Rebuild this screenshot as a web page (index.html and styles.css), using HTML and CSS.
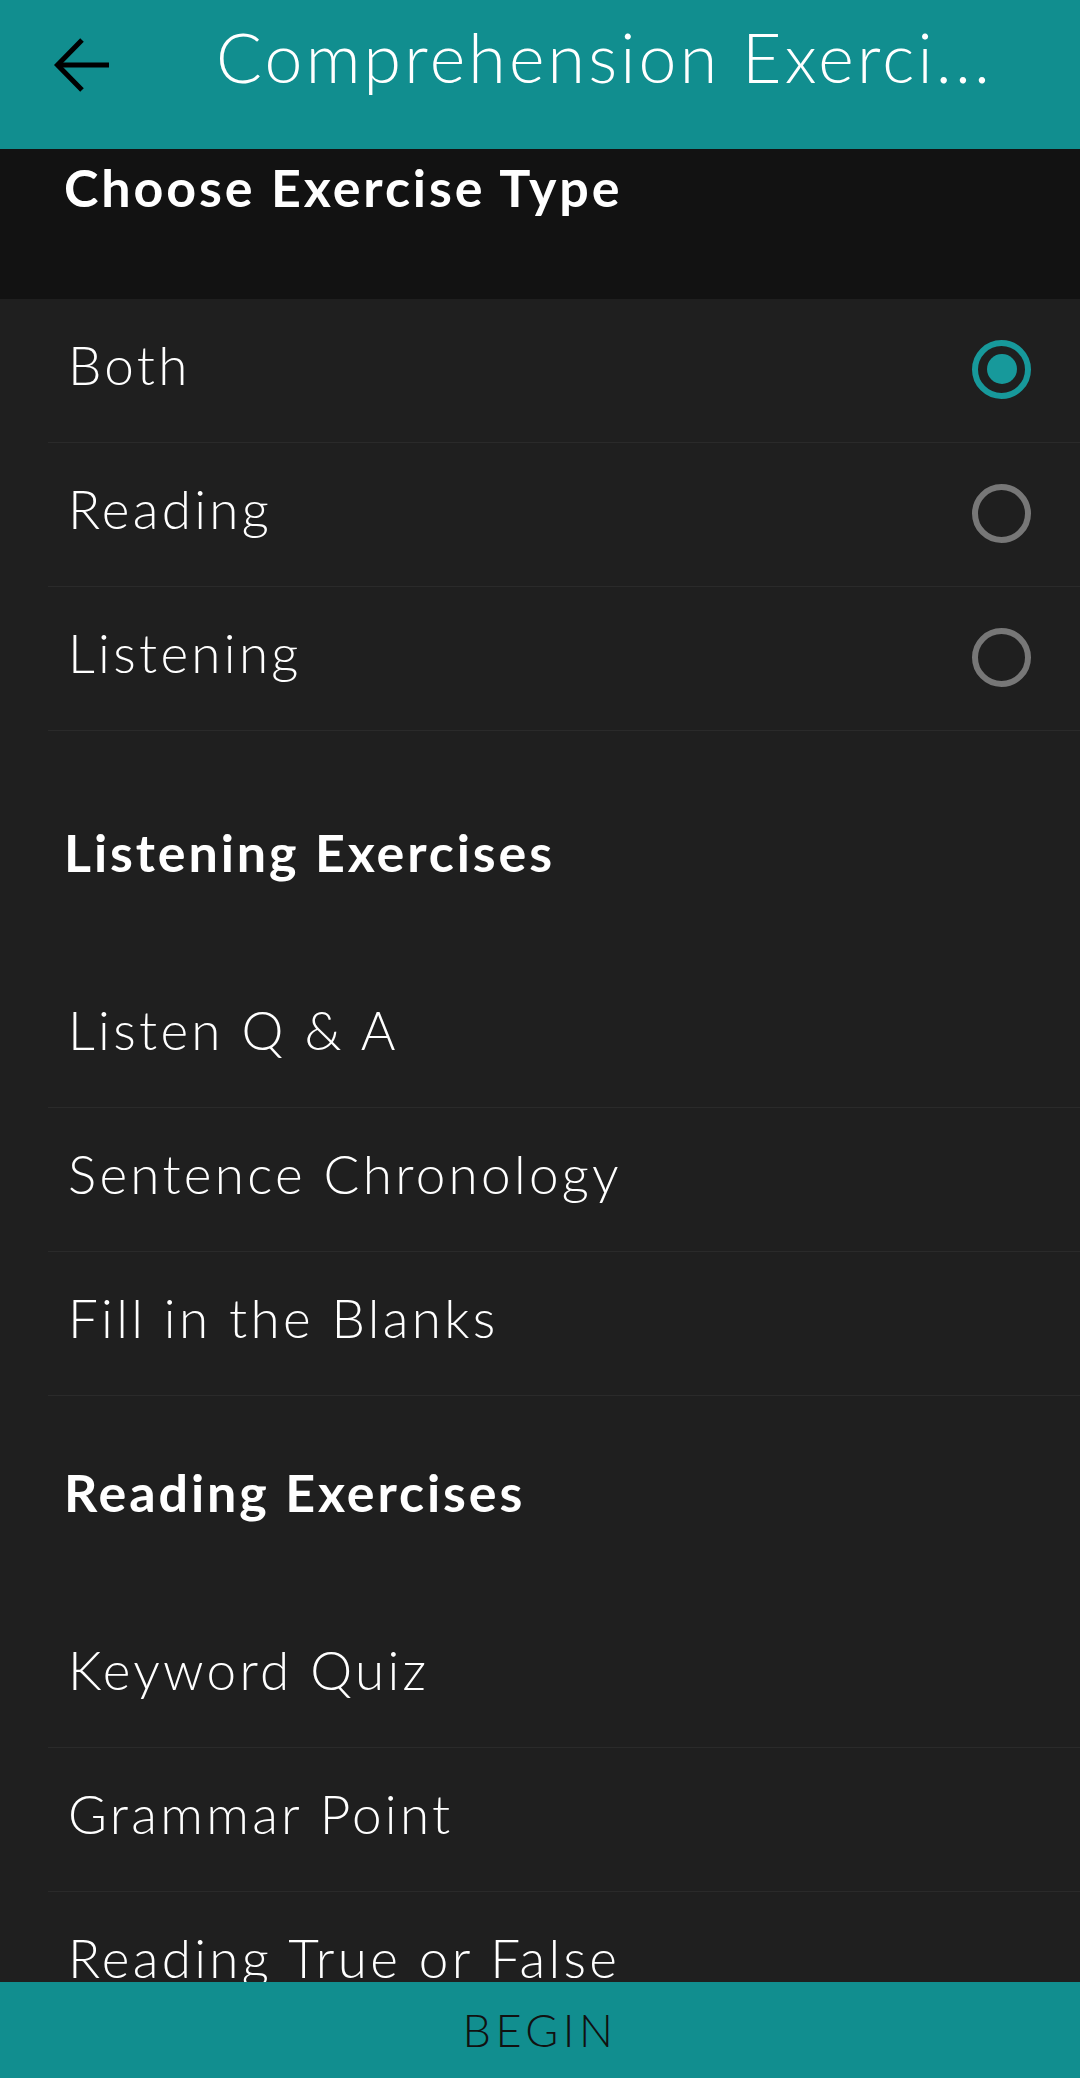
FILE: index.html
```html
<!DOCTYPE html>
<html>
<head>
<meta charset="utf-8">
<link rel="stylesheet" href="styles.css">
</head>
<body>
<div class="app">
  <header class="toolbar">
    <div class="back">
      <svg width="60" height="60" viewBox="0 0 60 60">
        <path d="M6 30 H57" stroke="#000" stroke-width="5" fill="none"/>
        <path d="M30 5 L5.5 30 L30 55" stroke="#000" stroke-width="5" fill="none" stroke-linejoin="miter"/>
      </svg>
    </div>
    <div class="title">Comprehension Exerci...</div>
  </header>
  <main class="content">
    <div class="section-head dark">Choose Exercise Type</div>
    <div class="row"><span class="label">Both</span><span class="radio on"></span></div>
    <div class="row"><span class="label">Reading</span><span class="radio"></span></div>
    <div class="row"><span class="label">Listening</span><span class="radio"></span></div>

    <div class="section-head gap-lg">Listening Exercises</div>
    <div class="row"><span class="label">Listen Q &amp; A</span></div>
    <div class="row"><span class="label">Sentence Chronology</span></div>
    <div class="row"><span class="label">Fill in the Blanks</span></div>

    <div class="section-head gap-sm">Reading Exercises</div>
    <div class="row"><span class="label">Keyword Quiz</span></div>
    <div class="row"><span class="label">Grammar Point</span></div>
    <div class="row"><span class="label">Reading True or False</span></div>
  </main>
  <footer class="begin">BEGIN</footer>
</div>
</body>
</html>
```
FILE: styles.css
```css
html, body {
  margin: 0;
  padding: 0;
  background: #1f1f1f;
}
.app {
  width: 1080px;
  height: 2078px;
  display: flex;
  flex-direction: column;
  overflow: hidden;
  font-family: "Lato", "Noto Sans", sans-serif;
}
.toolbar {
  height: 149px;
  flex: none;
  background: #118e8f;
  display: flex;
  align-items: flex-start;
}
.back {
  width: 60px;
  height: 60px;
  margin: 35px 0 0 52px;
}
.title {
  margin: 12px 0 0 104px;
  color: #ffffff;
  font-size: 68px;
  font-weight: 300;
  letter-spacing: 3.2px;
  line-height: 90px;
  white-space: nowrap;
}
.content {
  flex: 1;
  overflow: hidden;
  display: flex;
  flex-direction: column;
}
.section-head {
  flex: none;
  height: 150px;
  box-sizing: border-box;
  padding: 6px 0 0 64px;
  color: #ffffff;
  font-size: 52px;
  font-weight: 700;
  letter-spacing: 2.9px;
  line-height: 64px;
}
.section-head.dark {
  background: #121212;
}
.section-head.gap-lg {
  margin-top: 83px;
}
.section-head.gap-sm {
  margin-top: 58px;
}
.row {
  flex: none;
  height: 144px;
  box-sizing: border-box;
  margin-left: 48px;
  padding: 0 49px 12px 20px;
  border-bottom: 1px solid #2a2a2a;
  display: flex;
  align-items: center;
  justify-content: space-between;
}
.label {
  color: #ffffff;
  font-size: 53px;
  font-weight: 300;
  letter-spacing: 3.3px;
}
.radio {
  width: 59px;
  height: 59px;
  box-sizing: border-box;
  border: 6px solid #777777;
  border-radius: 50%;
  display: flex;
  align-items: center;
  justify-content: center;
  margin-top: 9px;
}
.radio.on {
  border-color: #17999b;
}
.radio.on::after {
  content: "";
  width: 30px;
  height: 30px;
  border-radius: 50%;
  background: #17999b;
}
.begin {
  flex: none;
  height: 96px;
  background: #118e8f;
  color: #111111;
  font-size: 45px;
  font-weight: 300;
  letter-spacing: 4.5px;
  display: flex;
  align-items: center;
  justify-content: center;
}
```
